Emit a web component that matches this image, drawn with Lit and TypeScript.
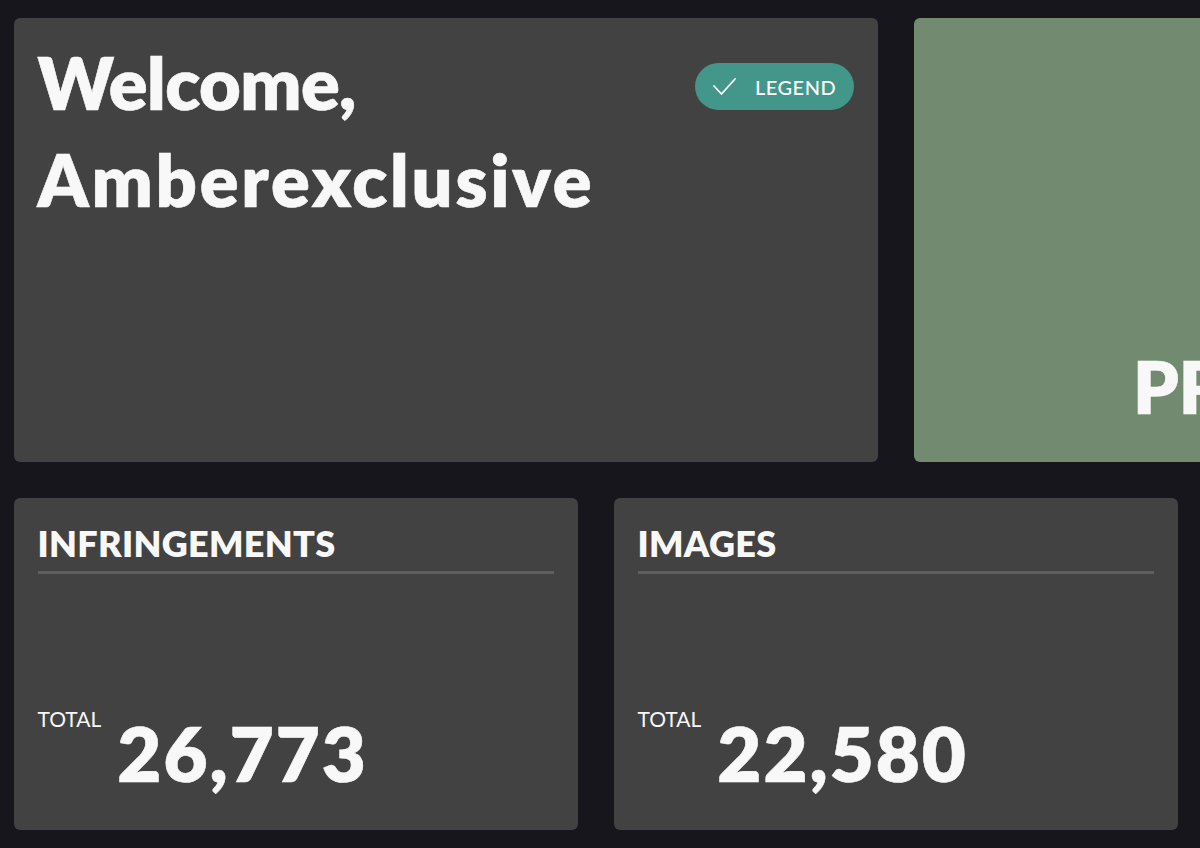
import { LitElement, html, css } from "lit";
import { customElement } from "lit/decorators.js";

@customElement("app-root")
export class AppRoot extends LitElement {
  static styles = css`
    :host {
      display: block;
      width: 1200px;
      height: 848px;
      overflow: hidden;
      background: #16161c;
      font-family: "Lato", "Noto Sans", sans-serif;
      color: #f8f8f8;
    }
    .page {
      width: 1800px;
      padding: 18px 14px;
      box-sizing: border-box;
      display: flex;
      flex-direction: column;
      gap: 36px;
    }
    .row { display: flex; gap: 36px; }
    .card {
      background: #424242;
      border-radius: 6px;
      box-sizing: border-box;
    }
    .welcome {
      width: 864px;
      height: 444px;
      padding: 16px 24px 18px 23.5px;
      display: flex;
      justify-content: space-between;
      align-items: flex-start;
    }
    h1 {
      margin: 0;
      font-size: 72px;
      line-height: 97px;
      font-weight: 800;
      -webkit-text-stroke: 0.6px #f8f8f8;
    }
    .tight { letter-spacing: -0.6px; }
    .wide { letter-spacing: 2.8px; }
    .badge {
      margin-top: 29px;
      width: 159px;
      height: 47px;
      border-radius: 24px;
      background: #43968a;
      display: flex;
      align-items: center;
      box-sizing: border-box;
      padding-left: 17px;
      gap: 18px;
      font-size: 20px;
      font-weight: 500;
      letter-spacing: 0.5px;
      color: #fff;
    }
    .badge svg { width: 25px; height: 25px; flex: none; }
    .promo {
      width: 864px;
      height: 444px;
      background: #718a70;
      padding: 0 0 40px 219px;
      display: flex;
      align-items: flex-end;
      font-size: 72px;
      line-height: 72px;
      font-weight: 800;
      -webkit-text-stroke: 0.6px #f8f8f8;
    }
    .stat {
      width: 564px;
      height: 332px;
      padding: 18px 24px 0 23.5px;
      display: flex;
      flex-direction: column;
    }
    h2 {
      margin: 0;
      font-size: 36px;
      line-height: 55px;
      font-weight: 800;
      letter-spacing: 0.3px;
      border-bottom: 3px solid #5f5f5f;
    }
    .total {
      margin-top: auto;
      margin-bottom: 38px;
      display: flex;
      align-items: flex-start;
      gap: 16px;
    }
    .label { font-size: 21px; line-height: 26px; font-weight: 400; margin-top: -2px; }
    .num {
      font-size: 76px;
      line-height: 78px;
      font-weight: 800;
      letter-spacing: 2px;
      margin-top: 6px;
      -webkit-text-stroke: 0.6px #f8f8f8;
    }
  `;

  render() {
    return html`
      <div class="page">
        <div class="row">
          <div class="card welcome">
            <h1><span class="tight">Welcome,</span><br /><span class="wide">Amberexclusive</span></h1>
            <div class="badge">
              <svg viewBox="0 0 25 25" fill="none" stroke="#fff" stroke-width="1.8" stroke-linecap="round" stroke-linejoin="round">
                <path d="M2 12 L9.5 20 L23 5" />
              </svg>
              <span>LEGEND</span>
            </div>
          </div>
          <div class="card promo">PROFILE</div>
        </div>
        <div class="row">
          ${[["INFRINGEMENTS", "26,773"], ["IMAGES", "22,580"]].map(
            ([t, n]) => html`
              <div class="card stat">
                <h2>${t}</h2>
                <div class="total"><span class="label">TOTAL</span><span class="num">${n}</span></div>
              </div>
            `
          )}
        </div>
      </div>
    `;
  }
}
